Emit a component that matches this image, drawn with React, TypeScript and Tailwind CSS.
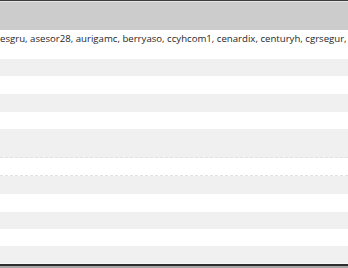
const rows = [
  { h: "h-[29px]", bg: "bg-white", text: true },
  { h: "h-[17px]", bg: "bg-[#f0f0f0]" },
  { h: "h-[18px]", bg: "bg-white" },
  { h: "h-[18px]", bg: "bg-[#f0f0f0]" },
  { h: "h-[17px]", bg: "bg-white" },
  { h: "h-[29px]", bg: "bg-[#f0f0f0]", dashBottom: true },
  { h: "h-[18px]", bg: "bg-white", dashBottom: true },
  { h: "h-[18px]", bg: "bg-[#f0f0f0]" },
  { h: "h-[18px]", bg: "bg-white" },
  { h: "h-[17px]", bg: "bg-[#f0f0f0]" },
  { h: "h-[17px]", bg: "bg-white" },
  { h: "h-[17px]", bg: "bg-[#f0f0f0]" },
];

export default function App() {
  return (
    <div className="w-[348px] h-[268px] overflow-hidden bg-white font-['Open_Sans',sans-serif] text-[#1f1f1f]">
      <div className="h-px bg-[#3c3c3c]" />
      <div className="h-[29px] bg-[#cccccc] border-t border-[#e4e4e4]" />
      {rows.map((r, i) => (
        <div
          key={i}
          className={`${r.h} ${r.bg} ${r.dashBottom ? "border-b border-dashed border-[#e2e2e2]" : ""} overflow-hidden`}
        >
          {r.text && (
            <div className="whitespace-nowrap text-[9.65px] leading-[14px] pt-[2px]">
              esgru, asesor28, aurigamc, berryaso, ccyhcom1, cenardix, centuryh, cgrsegur,
            </div>
          )}
        </div>
      ))}
      <div className="h-px bg-[#f8f8f8]" />
      <div className="h-[2px] bg-[#2e2e2e]" />
      <div className="h-[2px] bg-[#a8a8a8]" />
    </div>
  );
}
